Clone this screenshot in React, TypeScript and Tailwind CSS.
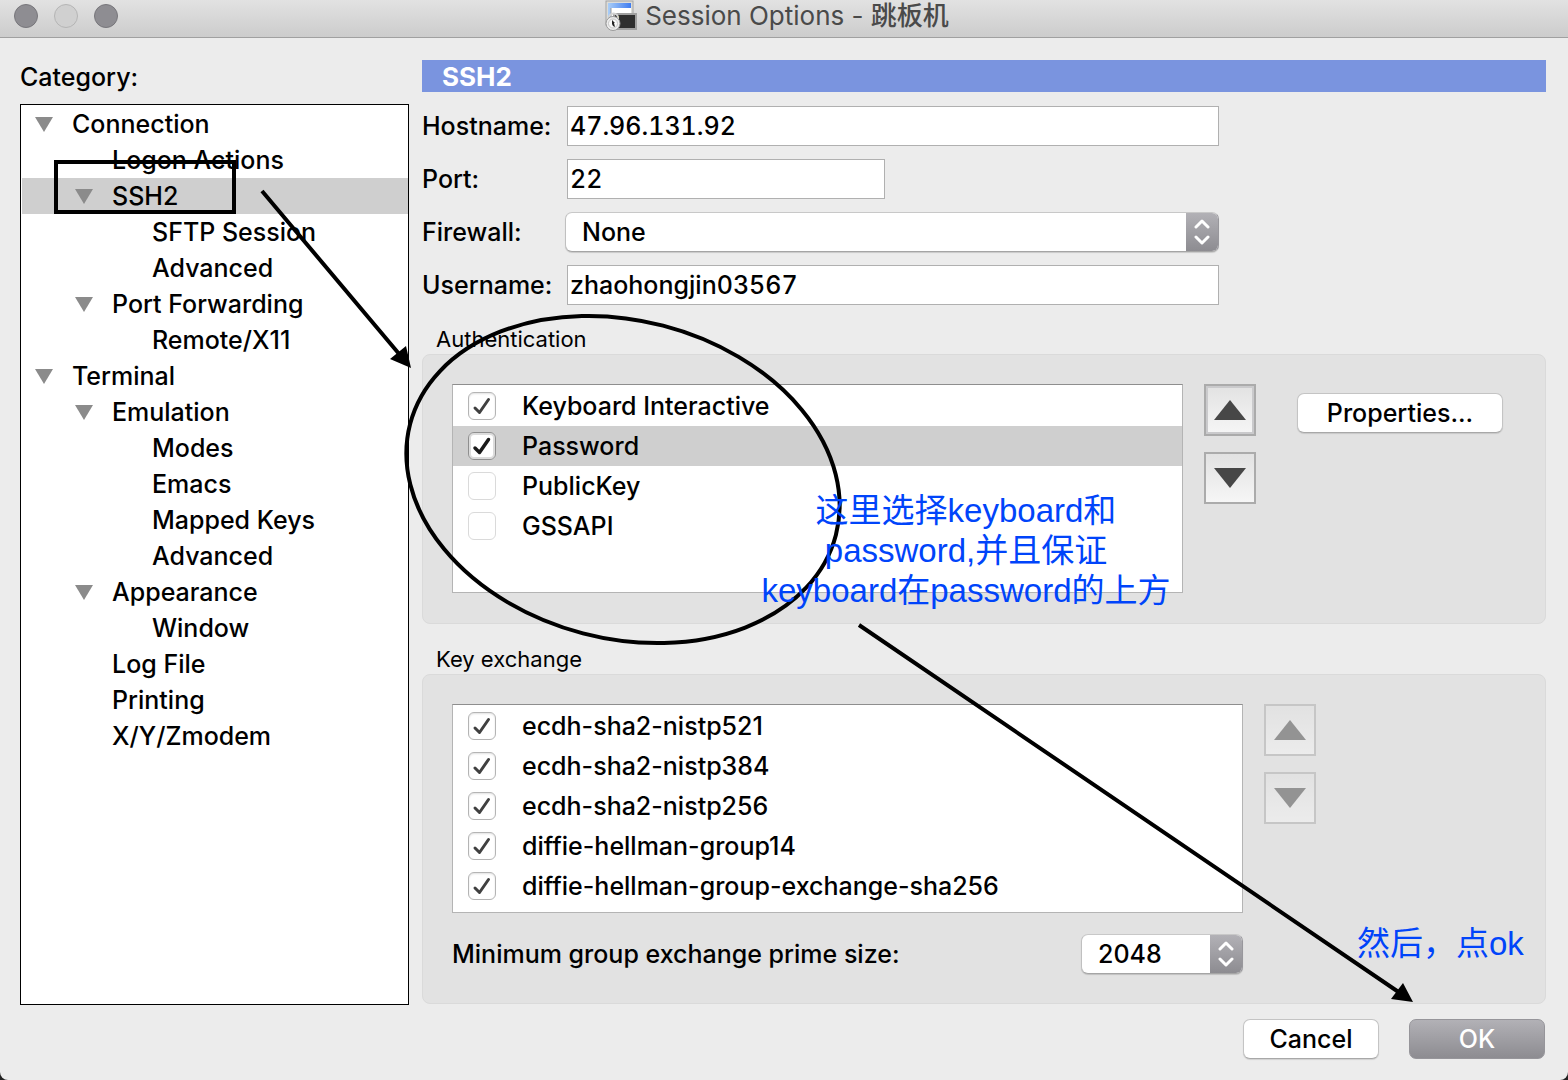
import React, { useId } from "react";

const SANS = "font-['Inter','Noto_Sans_CJK_SC',sans-serif]";
const NOTE = "font-['Liberation_Sans','Noto_Sans_CJK_SC',sans-serif]";

type Node = { label: string; level: 0 | 1 | 2; open?: boolean; selected?: boolean };

const TREE: Node[] = [
  { label: "Connection", level: 0, open: true },
  { label: "Logon Actions", level: 1 },
  { label: "SSH2", level: 1, open: true, selected: true },
  { label: "SFTP Session", level: 2 },
  { label: "Advanced", level: 2 },
  { label: "Port Forwarding", level: 1, open: true },
  { label: "Remote/X11", level: 2 },
  { label: "Terminal", level: 0, open: true },
  { label: "Emulation", level: 1, open: true },
  { label: "Modes", level: 2 },
  { label: "Emacs", level: 2 },
  { label: "Mapped Keys", level: 2 },
  { label: "Advanced", level: 2 },
  { label: "Appearance", level: 1, open: true },
  { label: "Window", level: 2 },
  { label: "Log File", level: 1 },
  { label: "Printing", level: 1 },
  { label: "X/Y/Zmodem", level: 1 },
];

const INDENT = ["pl-[13px]", "pl-[53px]", "pl-[93px]"];

function TreeRow({ label, level, open, selected }: Node) {
  return (
    <li
      role="treeitem"
      aria-expanded={open}
      aria-selected={!!selected}
      className={`flex h-9 items-center ${INDENT[level]} ${selected ? "bg-[#cfcfcf]" : ""}`}
    >
      <span className="flex w-[37px] shrink-0 items-center">
        {open && (
          <svg width="18" height="15" viewBox="0 0 18 15" aria-hidden="true">
            <path d="M0 0H18L9 15Z" fill="#8b8b8b" />
          </svg>
        )}
      </span>
      <span>{label}</span>
    </li>
  );
}

function SessionIcon() {
  return (
    <svg width="32" height="32" viewBox="0 0 32 32" aria-hidden="true">
      <defs>
        <linearGradient id="sky" x1="0" y1="0" x2="1" y2="0">
          <stop offset="0" stopColor="#a9cdf7" />
          <stop offset="1" stopColor="#3f7cf0" />
        </linearGradient>
      </defs>
      <rect x="1" y="1" width="27" height="24" fill="#dcdcd8" stroke="#a3a3a3" />
      <rect x="3" y="3" width="23" height="20" fill="url(#sky)" />
      <path d="M6 8H26V23H6Z" fill="#fff" />
      <path d="M6 8V23" stroke="#999" />
      <rect x="9" y="14" width="22" height="15" fill="#2f2f2f" stroke="#a0a0a0" strokeWidth="2" />
      <path d="M12 16l2 1-2 1" stroke="#c8b400" fill="none" />
      <path d="M4 19v-1a4 4 0 0 1 9 0v1" fill="none" stroke="#d2d2d2" strokeWidth="2" />
      <circle cx="8" cy="23.500" r="7" fill="#ececec" stroke="#9a9a9a" />
      <circle cx="8" cy="23.500" r="4.500" fill="#f8f8f8" stroke="#c4c4c4" />
      <path d="M7 20l3 3-1 0 1 4-2-1-1-2z" fill="#222" />
    </svg>
  );
}

function TextRow({ label, value, wide }: { label: string; value: string; wide?: boolean }) {
  const id = useId();
  return (
    <div className="flex h-10 items-center">
      <label htmlFor={id} className="w-[145px] shrink-0">{label}</label>
      <input
        id={id}
        type="text"
        defaultValue={value}
        className={`h-10 border border-[#b0b0b0] bg-white px-0.5 tabular-nums outline-none ${wide ? "w-[652px]" : "w-[318px]"}`}
      />
    </div>
  );
}

function PopUp({ id, options, className }: { id: string; options: string[]; className: string }) {
  return (
    <span
      className={`relative flex h-10 overflow-hidden rounded-[7px] border border-t-[#c8c8c8] border-r-[#98979c] border-b-[#a5a5a5] border-l-[#c0c0c0] bg-white shadow-[0_1px_1px_rgba(0,0,0,0.15)] ${className}`}
    >
      <select id={id} className="w-full appearance-none bg-transparent pl-4 outline-none">
        {options.map((o) => (
          <option key={o}>{o}</option>
        ))}
      </select>
      <span className="pointer-events-none absolute inset-y-0 right-0 flex w-8 items-center justify-center bg-linear-to-b from-[#b2b1b6] to-[#8d8c91]">
        <svg width="18" height="26" viewBox="0 0 18 26" fill="none" stroke="#fff" strokeWidth="3" strokeLinecap="round" strokeLinejoin="round" aria-hidden="true">
          <path d="M3 8L9 2L15 8M3 18L9 24L15 18" />
        </svg>
      </span>
    </span>
  );
}

type Method = { label: string; checked: boolean; selected?: boolean };

function CheckRow({ label, checked, selected }: Method) {
  return (
    <li className={selected ? "bg-[#cfcfcf]" : ""}>
      <label className="flex h-10 items-center gap-[26px] pl-[15px]">
        <span className="relative flex size-7 shrink-0">
          <input
            type="checkbox"
            defaultChecked={checked}
            className={`peer size-7 appearance-none rounded-[6px] bg-white ${
              selected
                ? "border border-[#8f8f8f] shadow-[inset_0_0_0_2px_#dcdcdc]"
                : checked
                  ? "border border-[#b4b4b4] shadow-[inset_0_1px_2px_rgba(0,0,0,0.12)]"
                  : "border border-[#dadada]"
            }`}
          />
          <svg
            className="pointer-events-none absolute inset-0 hidden peer-checked:block"
            width="28"
            height="28"
            viewBox="0 0 28 28"
            fill="none"
            stroke={selected ? "#1a1a1a" : "#404040"}
            strokeWidth={selected ? 3.5 : 3}
            strokeLinecap="round"
            strokeLinejoin="round"
            aria-hidden="true"
          >
            <path d="M7 16L11.500 20.500L20.500 7.500" />
          </svg>
        </span>
        <span>{label}</span>
      </label>
    </li>
  );
}

const AUTH: Method[] = [
  { label: "Keyboard Interactive", checked: true },
  { label: "Password", checked: true, selected: true },
  { label: "PublicKey", checked: false },
  { label: "GSSAPI", checked: false },
];

const KEX: Method[] = [
  { label: "ecdh-sha2-nistp521", checked: true },
  { label: "ecdh-sha2-nistp384", checked: true },
  { label: "ecdh-sha2-nistp256", checked: true },
  { label: "diffie-hellman-group14", checked: true },
  { label: "diffie-hellman-group-exchange-sha256", checked: true },
];

function CheckList({ items, className }: { items: Method[]; className: string }) {
  return (
    <ul className={`h-[209px] border border-t-[#8e8e8e] border-r-[#b4b4b4] border-b-[#b4b4b4] border-l-[#b4b4b4] bg-white pt-px ${className}`}>
      {items.map((m) => (
        <CheckRow key={m.label} {...m} />
      ))}
    </ul>
  );
}

function MoveButton({ up, disabled, focused }: { up?: boolean; disabled?: boolean; focused?: boolean }) {
  return (
    <button
      type="button"
      disabled={disabled}
      aria-label={up ? "Move up" : "Move down"}
      className={`flex size-[52px] items-center justify-center border-2 border-[#ababab] bg-linear-to-b from-[#e2e2e2] to-[#f6f6f6] disabled:opacity-50 ${
        focused ? "shadow-[inset_0_0_0_2px_#cacacc]" : ""
      }`}
    >
      <svg width="32" height="20" viewBox="0 0 32 20" aria-hidden="true">
        <path d={up ? "M16 0L32 20H0Z" : "M0 0H32L16 20Z"} fill="#474747" />
      </svg>
    </button>
  );
}

function Group({ title, children }: { title: string; children: React.ReactNode }) {
  return (
    <section>
      <h2 className="flex h-[30px] items-center pl-[14px] text-[22px] font-normal">{title}</h2>
      <div className="rounded-lg border border-[#dadada] bg-[#e2e2e2] px-[29px] pt-[29px]">{children}</div>
    </section>
  );
}

function Annotations() {
  return (
    <div className="pointer-events-none absolute inset-0 overflow-hidden font-normal">
      <svg className="absolute top-0 left-0" width="1568" height="1080" viewBox="0 0 1568 1080" fill="none" stroke="#000" strokeWidth="4" aria-hidden="true">
        <rect x="56" y="162" width="178" height="50" />
        <path d="M262 191L400 355M859 625L1400 993" />
        <path d="M411 368L390 359L406 346ZM1413 1002L1391 999L1403 983Z" fill="#000" stroke="none" />
        <ellipse cx="623" cy="479.500" rx="220" ry="159" transform="rotate(14.600 623 479.500)" />
      </svg>
      <p className={`absolute top-[491px] left-[746px] w-[440px] text-center text-[33px] leading-10 text-[#0044fa] ${NOTE}`}>
        这里选择keyboard和
        <br />
        password,并且保证
        <br />
        keyboard在password的上方
      </p>
      <p className={`absolute top-[924px] left-[1357px] text-[33px] leading-10 whitespace-nowrap text-[#0044fa] ${NOTE}`}>然后，点ok</p>
    </div>
  );
}

export default function App() {
  return (
    <div className="bg-[#222]">
      <div className={`relative flex min-h-screen flex-col overflow-hidden rounded-b-lg bg-[#ececec] text-[25px] leading-8 font-medium text-black ${SANS}`}>
        <header className="flex h-[38px] items-center border-b border-[#a0a0a0] bg-linear-to-b from-[#e2e2e2] to-[#cccccc] pb-[5px]">
          <div className="flex flex-1 gap-4 pl-[14px]">
            <button type="button" aria-label="Close" className="size-6 rounded-full border border-[#77767b] bg-[#8e8d92]" />
            <button type="button" aria-label="Minimize" className="size-6 rounded-full border border-[#b5b5b5] bg-[#d0d0d0]" />
            <button type="button" aria-label="Zoom" className="size-6 rounded-full border border-[#77767b] bg-[#8e8d92]" />
          </div>
          <h1 className="flex items-center gap-2 text-[26px] leading-[34px] font-normal text-[#4a4a4a]">
            <SessionIcon />
            <span>
              Session Options - <span className="font-medium">跳板机</span>
            </span>
          </h1>
          <div className="flex-1 pr-7" />
        </header>

        <div className="flex gap-[13px] pt-[22px] pr-[22px] pl-5">
          <nav className="flex w-[389px] shrink-0 flex-col">
            <h2 id="category" className="mb-[11px] pt-px">Category:</h2>
            <ul role="tree" aria-labelledby="category" className="h-[901px] border border-black bg-white py-px pl-px">
              {TREE.map((n, i) => (
                <TreeRow key={i} {...n} />
              ))}
            </ul>
          </nav>

          <main className="min-w-0 flex-1">
            <h2 className="mb-[14px] h-8 bg-[#7a94df] pl-5 text-[26px] leading-[34px] font-bold text-white">SSH2</h2>
            <div className="flex flex-col gap-[13px]">
              <TextRow label="Hostname:" value="47.96.131.92" wide />
              <TextRow label="Port:" value="22" />
              <div className="flex h-10 items-center">
                <label htmlFor="firewall" className="w-[143px] shrink-0">Firewall:</label>
                <PopUp id="firewall" options={["None"]} className="w-[654px]" />
              </div>
              <TextRow label="Username:" value="zhaohongjin03567" wide />
            </div>

            <div className="mt-[19px] flex flex-col gap-5">
              <Group title="Authentication">
                <div className="flex pb-[30px]">
                  <CheckList items={AUTH} className="w-[731px]" />
                  <div className="ml-[21px] flex flex-col gap-4">
                    <MoveButton up focused />
                    <MoveButton />
                  </div>
                  <button type="button" className="mt-[9px] ml-[41px] h-10 w-[206px] rounded-[7px] border border-[#c4c4c4] border-b-[#a8a8a8] bg-white shadow-[0_1px_1px_rgba(0,0,0,0.12)]">
                    Properties...
                  </button>
                </div>
              </Group>
              <Group title="Key exchange">
                <div className="flex">
                  <CheckList items={KEX} className="w-[791px]" />
                  <div className="ml-[21px] flex flex-col gap-4">
                    <MoveButton up disabled />
                    <MoveButton disabled />
                  </div>
                </div>
                <div className="flex w-[791px] items-center justify-between pt-[21px] pb-[29px]">
                  <label htmlFor="prime">Minimum group exchange prime size:</label>
                  <PopUp id="prime" options={["2048"]} className="w-[162px]" />
                </div>
              </Group>
            </div>
          </main>
        </div>

        <footer className="flex justify-end gap-[30px] pt-[14px] pr-[23px]">
          <button type="button" className="h-10 w-[136px] rounded-[7px] border border-[#c4c4c4] border-b-[#a8a8a8] bg-white shadow-[0_1px_1px_rgba(0,0,0,0.12)]">
            Cancel
          </button>
          <button type="submit" className="h-10 w-[136px] rounded-[7px] border border-[#96959a] bg-linear-to-b from-[#b2b1b6] to-[#8d8c91] text-white">
            OK
          </button>
        </footer>
        <Annotations />
      </div>
    </div>
  );
}
